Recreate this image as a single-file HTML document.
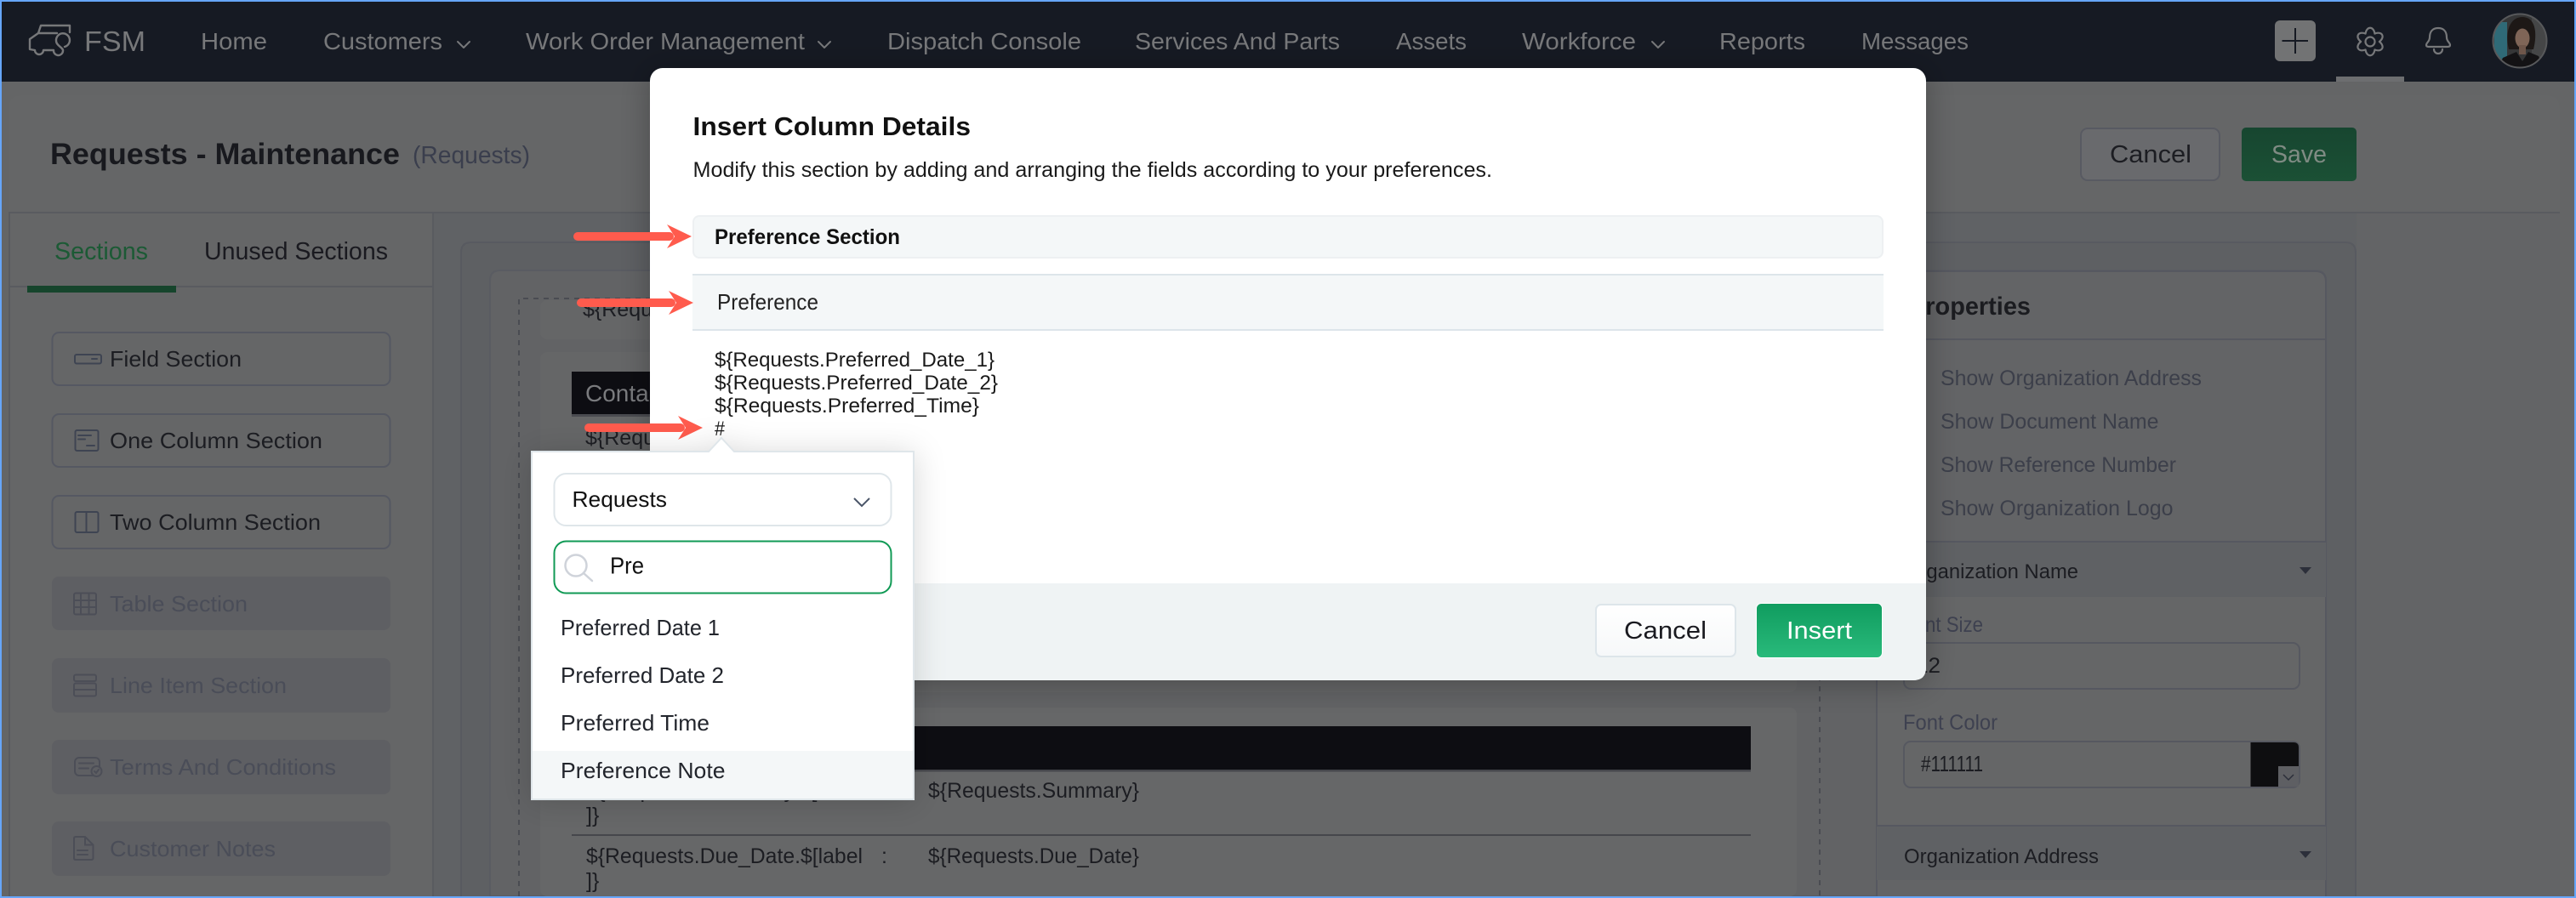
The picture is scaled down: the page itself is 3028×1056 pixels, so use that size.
<!DOCTYPE html>
<html><head><meta charset="utf-8"><title>Insert Column Details</title>
<style>
html,body{margin:0;padding:0;background:#66a6fa;width:3028px;height:1056px;overflow:hidden}
svg{display:block}
text{font-family:"Liberation Sans",sans-serif;white-space:pre}
.ln{fill:none;stroke-linecap:round;stroke-linejoin:round}
</style></head><body>
<svg xmlns="http://www.w3.org/2000/svg" width="3028" height="1056" viewBox="0 0 3028 1056">
<defs>
<linearGradient id="gi" x1="0" y1="0" x2="0" y2="1"><stop offset="0" stop-color="#109c5f"/><stop offset="1" stop-color="#29ba7b"/></linearGradient>
<linearGradient id="gc" x1="0" y1="0" x2="0" y2="1"><stop offset="0" stop-color="#ffffff"/><stop offset="1" stop-color="#f6f8f9"/></linearGradient>
<linearGradient id="gs" x1="0" y1="0" x2="0" y2="1"><stop offset="0" stop-color="#174630"/><stop offset="1" stop-color="#1b5035"/></linearGradient>
<clipPath id="av"><circle cx="2962" cy="48" r="31"/></clipPath>
<filter id="sh" x="-10%" y="-20%" width="120%" height="140%"><feDropShadow dx="0" dy="4" stdDeviation="18" flood-color="#000" flood-opacity=".28"/></filter>
<filter id="sp" x="-20%" y="-20%" width="140%" height="140%"><feDropShadow dx="0" dy="2" stdDeviation="18" flood-color="#000" flood-opacity=".16"/></filter>
</defs>

<!-- frame -->
<rect width="3028" height="1056" fill="#66a6fa"/>
<rect x="2" y="2" width="3024" height="1052" fill="#646566"/>

<!-- nav -->
<rect x="2" y="2" width="3024" height="94" fill="#161a23"/>
<g class="ln" fill="none" stroke="#77787a" stroke-width="2.4" style="fill:none">
<path d="M82 38V30H48L45 39H67M45 39L35 46V58L41 59A5 5 0 0 0 51 59H63A5.500 5.500 0 0 0 74 60C75 56 66 54 66 48A8 8 0 1 1 76 55"/>
</g>
<text x="99" y="60" font-size="33" fill="#77787a" textLength="72" lengthAdjust="spacingAndGlyphs">FSM</text>
<g font-size="28" fill="#77787a">
<text x="236" y="58" textLength="78" lengthAdjust="spacingAndGlyphs">Home</text>
<text x="380" y="58" textLength="140" lengthAdjust="spacingAndGlyphs">Customers</text>
<text x="618" y="58" textLength="328" lengthAdjust="spacingAndGlyphs">Work Order Management</text>
<text x="1043" y="58" textLength="228" lengthAdjust="spacingAndGlyphs">Dispatch Console</text>
<text x="1334" y="58" textLength="241" lengthAdjust="spacingAndGlyphs">Services And Parts</text>
<text x="1641" y="58" textLength="83" lengthAdjust="spacingAndGlyphs">Assets</text>
<text x="1789" y="58" textLength="134" lengthAdjust="spacingAndGlyphs">Workforce</text>
<text x="2021" y="58" textLength="101" lengthAdjust="spacingAndGlyphs">Reports</text>
<text x="2188" y="58" textLength="126" lengthAdjust="spacingAndGlyphs">Messages</text>
</g>
<g stroke="#77787a" stroke-width="2" style="fill:none" class="ln">
<path d="M538 49L545 56L552 49"/><path d="M962 49L969 56L976 49"/><path d="M1942 49L1949 56L1956 49"/>
</g>
<rect x="2674" y="24" width="48" height="48" rx="6" fill="#727374"/>
<path d="M2682.500 48H2713M2698 33V63" stroke="#161a23" stroke-width="2" fill="none"/>
<g transform="translate(2786 49)" fill="none" stroke="#77787a" stroke-width="2.200" stroke-linecap="round">
<path d="M-5.500 -9.500C-4 -18.500 4 -18.500 5.500 -9.500"/>
<path transform="rotate(60)" d="M-5.500 -9.500C-4 -18.500 4 -18.500 5.500 -9.500"/>
<path transform="rotate(120)" d="M-5.500 -9.500C-4 -18.500 4 -18.500 5.500 -9.500"/>
<path transform="rotate(180)" d="M-5.500 -9.500C-4 -18.500 4 -18.500 5.500 -9.500"/>
<path transform="rotate(240)" d="M-5.500 -9.500C-4 -18.500 4 -18.500 5.500 -9.500"/>
<path transform="rotate(300)" d="M-5.500 -9.500C-4 -18.500 4 -18.500 5.500 -9.500"/>
<circle r="5.500"/>
</g>
<rect x="2746" y="90" width="80" height="6" fill="#6d6e70"/>
<path d="M2866 33C2858 33 2856 39 2856 44C2856 49 2852 50 2852 53Q2852 55 2855 55H2877Q2880 55 2880 53C2880 50 2876 49 2876 44C2876 39 2874 33 2866 33ZM2861 58A5 5 0 0 0 2871 58" fill="none" stroke="#77787a" stroke-width="2.200" stroke-linecap="round"/>
<g clip-path="url(#av)">
<rect x="2930" y="16" width="64" height="64" fill="#353637"/>
<rect x="2932" y="26" width="15" height="46" fill="#2f6a77"/>
<rect x="2976" y="16" width="20" height="64" fill="#454647"/>
<path d="M2949 58C2944 38 2950 20 2965 20C2980 20 2983 38 2978 58Z" fill="#1d1816"/>
<ellipse cx="2965" cy="45" rx="8.500" ry="11.500" fill="#7f6557"/>
<rect x="2961" y="53" width="8" height="11" fill="#6e564a"/>
<path d="M2936 80L2942 68L2958 61L2965 72L2972 61L2984 66L2990 80Z" fill="#131214"/>
</g>
<circle cx="2962" cy="48" r="31.500" fill="none" stroke="#58595b" stroke-width="2"/>

<!-- page header -->
<path d="M10 250V128Q10 112 26 112H2993Q3009 112 3009 128V250Z" fill="#656667"/>
<rect x="10" y="249" width="2999" height="2.500" fill="#595b60"/>
<text x="59" y="193" font-size="35" font-weight="bold" fill="#18191e" textLength="411" lengthAdjust="spacingAndGlyphs">Requests - Maintenance</text>
<text x="485" y="192" font-size="29" fill="#3a3e4d" textLength="138" lengthAdjust="spacingAndGlyphs">(Requests)</text>
<rect x="2446" y="151" width="163" height="61" rx="8" fill="#696a6d" stroke="#585a62" stroke-width="2"/>
<text x="2480" y="191" font-size="29" fill="#1c1d22" textLength="96" lengthAdjust="spacingAndGlyphs">Cancel</text>
<rect x="2635" y="150" width="135" height="63" rx="5" fill="url(#gs)"/>
<text x="2670" y="191" font-size="29" fill="#7f8b83" textLength="65" lengthAdjust="spacingAndGlyphs">Save</text>

<!-- left panel -->
<rect x="10" y="251" width="499" height="803" fill="#656667"/>
<rect x="10" y="251" width="2" height="803" fill="#595b60"/>
<rect x="508" y="251" width="2" height="803" fill="#595b60"/>
<rect x="10" y="336" width="499" height="2" fill="#595b60"/>
<rect x="32" y="336" width="175" height="8" fill="#16452c"/>
<text x="64" y="305" font-size="29" fill="#1c5a35" textLength="110" lengthAdjust="spacingAndGlyphs">Sections</text>
<text x="240" y="305" font-size="29" fill="#1a1a20" textLength="216" lengthAdjust="spacingAndGlyphs">Unused Sections</text>

<g fill="none" stroke="#555862" stroke-width="2">
<rect x="61.500" y="391" width="397" height="62" rx="8"/>
<rect x="61.500" y="487" width="397" height="62" rx="8"/>
<rect x="61.500" y="583" width="397" height="62" rx="8"/>
</g>
<g fill="#5e5f63">
<rect x="61" y="678" width="398" height="63" rx="8"/>
<rect x="61" y="774" width="398" height="64" rx="8"/>
<rect x="61" y="870" width="398" height="64" rx="8"/>
<rect x="61" y="966" width="398" height="64" rx="8"/>
</g>
<g font-size="26" fill="#1c1d22">
<text x="129" y="431" textLength="155" lengthAdjust="spacingAndGlyphs">Field Section</text>
<text x="129" y="527" textLength="250" lengthAdjust="spacingAndGlyphs">One Column Section</text>
<text x="129" y="623" textLength="248" lengthAdjust="spacingAndGlyphs">Two Column Section</text>
</g>
<g font-size="26" fill="#4a4d58">
<text x="129" y="719" textLength="162" lengthAdjust="spacingAndGlyphs">Table Section</text>
<text x="129" y="815" textLength="208" lengthAdjust="spacingAndGlyphs">Line Item Section</text>
<text x="129" y="911" textLength="266" lengthAdjust="spacingAndGlyphs">Terms And Conditions</text>
<text x="129" y="1007" textLength="195" lengthAdjust="spacingAndGlyphs">Customer Notes</text>
</g>
<g fill="none" stroke="#3e4452" stroke-width="2" stroke-linecap="round">
<rect x="88" y="417" width="31" height="10.500" rx="2"/><path d="M108 422H114"/>
<rect x="88.500" y="506" width="27" height="24" rx="2"/><path d="M92 512H107M92 516.500H100M102 524H111"/>
<rect x="88.500" y="602" width="27" height="24" rx="2"/><path d="M101.500 602V626"/>
</g>
<g fill="none" stroke="#4c4e57" stroke-width="2" stroke-linecap="round">
<rect x="87" y="697.500" width="26" height="25" rx="2"/><path d="M95 698V722M104.500 698V722M87 706H113M87 714H113"/>
<rect x="87" y="793.500" width="26" height="7.500" rx="2"/><rect x="87" y="803.500" width="26" height="15" rx="2"/><path d="M87 811H113"/>
<rect x="88" y="891" width="29" height="21" rx="5"/><path d="M93 897.500H110M93 903.500H104"/>
<circle cx="113.500" cy="907" r="6" fill="#5e5f63"/><path d="M111 907L113 909L116 905"/>
<path d="M100 984H89Q87 984 87 986V1009Q87 1011 89 1011H107Q109.500 1011 109.500 1009V993.500ZM100 984V993.500H109.500M91 1000H103M91 1005H103"/>
</g>

<!-- canvas -->
<rect x="510" y="251" width="2516" height="803" fill="#606265"/>
<rect x="3009" y="251" width="17" height="803" fill="#646566"/>
<rect x="2770" y="251" width="239" height="803" fill="#636466"/>
<path d="M542 1054V297Q542 285 554 285H2757Q2769 285 2769 297V1054" fill="#5e6063" stroke="#585a60" stroke-width="2"/>
<path d="M576 1054V330Q576 318 588 318H2722Q2734 318 2734 330V1054Z" fill="#626365" stroke="#5a5c62" stroke-width="2"/>
<rect x="635" y="353" width="1477" height="46" rx="8" fill="#656667"/>
<rect x="635" y="414" width="1477" height="400" rx="8" fill="#656667"/>
<rect x="635" y="832" width="1477" height="222" rx="8" fill="#666768"/>
<path d="M610 1054V351H2139V1054" fill="none" stroke="#4a4c52" stroke-width="2" stroke-dasharray="6 6"/>
<text x="685" y="372" font-size="25" fill="#1c1d22">${Requests.Header}</text>
<rect x="672" y="437" width="400" height="50" fill="#0d0d12"/>
<rect x="672" y="487" width="400" height="3" fill="#4a4b50"/>
<text x="688" y="472" font-size="28" fill="#7a7b7e">Contact</text>
<text x="688" y="523" font-size="25" fill="#1c1d22">${Requests.Contact}</text>
<rect x="672" y="854" width="1386" height="51" fill="#0d0d12"/>
<rect x="672" y="905" width="1386" height="2.500" fill="#46474c"/>
<rect x="672" y="981" width="1386" height="2" fill="#46474c"/>
<g font-size="25" fill="#1c1d22">
<text x="689" y="938" textLength="325" lengthAdjust="spacingAndGlyphs">${Requests.Summary.$[label</text>
<text x="689" y="967">]}</text>
<text x="1091" y="938" textLength="248" lengthAdjust="spacingAndGlyphs">${Requests.Summary}</text>
<text x="689" y="1015" textLength="325" lengthAdjust="spacingAndGlyphs">${Requests.Due_Date.$[label</text>
<text x="1036" y="1015">:</text>
<text x="689" y="1044">]}</text>
<text x="1091" y="1015" textLength="248" lengthAdjust="spacingAndGlyphs">${Requests.Due_Date}</text>
</g>

<!-- properties -->
<path d="M2206 1054V331Q2206 319 2218 319H2722Q2734 319 2734 331V1054Z" fill="#636466" stroke="#565860" stroke-width="2"/>
<rect x="2206" y="398" width="528" height="2" fill="#565860"/>
<text x="2244" y="370" font-size="30" font-weight="bold" fill="#1b1c20" textLength="143" lengthAdjust="spacingAndGlyphs">Properties</text>
<g font-size="25" fill="#3c3f4a">
<text x="2281" y="453" textLength="307" lengthAdjust="spacingAndGlyphs">Show Organization Address</text>
<text x="2281" y="504" textLength="256.500" lengthAdjust="spacingAndGlyphs">Show Document Name</text>
<text x="2281" y="555" textLength="277" lengthAdjust="spacingAndGlyphs">Show Reference Number</text>
<text x="2281" y="606" textLength="273.500" lengthAdjust="spacingAndGlyphs">Show Organization Logo</text>
</g>
<rect x="2206" y="636" width="528" height="66" fill="#5f6164"/>
<rect x="2206" y="636" width="528" height="2" fill="#565860"/>
<text x="2238" y="680" font-size="24" fill="#1c1d22" textLength="205" lengthAdjust="spacingAndGlyphs">Organization Name</text>
<path d="M2703 667H2717L2710 675Z" fill="#2c2f3a"/>
<rect x="2207" y="702" width="526" height="268" fill="#656667"/>
<text x="2237" y="743" font-size="25" fill="#3e4150" textLength="94" lengthAdjust="spacingAndGlyphs">Font Size</text>
<rect x="2238" y="756" width="465" height="54" rx="8" fill="none" stroke="#565860" stroke-width="2"/>
<text x="2252" y="791" font-size="25" fill="#1c1d22" textLength="29" lengthAdjust="spacingAndGlyphs">12</text>
<text x="2237" y="858" font-size="25" fill="#3e4150" textLength="111" lengthAdjust="spacingAndGlyphs">Font Color</text>
<rect x="2238" y="872" width="465" height="54" rx="8" fill="none" stroke="#565860" stroke-width="2"/>
<text x="2258" y="907" font-size="26" fill="#1c1d22" textLength="73" lengthAdjust="spacingAndGlyphs">#111111</text>
<path d="M2645.500 873H2696Q2702 873 2702 879V925H2645.500Z" fill="#0e0e10"/>
<rect x="2678" y="901" width="24" height="24" fill="#5e5f63"/>
<path d="M2684 911L2690 917L2696 911" fill="none" stroke="#2c2f3a" stroke-width="1.500"/>
<rect x="2206" y="970" width="528" height="65" fill="#5f6164"/>
<rect x="2206" y="970" width="528" height="2" fill="#565860"/>
<rect x="2207" y="1035" width="526" height="19" fill="#636466"/>
<text x="2238" y="1015" font-size="24" fill="#1c1d22" textLength="229" lengthAdjust="spacingAndGlyphs">Organization Address</text>
<path d="M2703 1001H2717L2710 1009Z" fill="#2c2f3a"/>

<!-- bottom frame repaint -->
<rect x="0" y="1054" width="3028" height="2" fill="#66a6fa"/>
<rect x="3026" y="0" width="2" height="1056" fill="#66a6fa"/>

<!-- modal -->
<rect x="764" y="80" width="1500" height="720" rx="15" fill="#fff" filter="url(#sh)"/>
<path d="M764 686H2264V785Q2264 800 2249 800H779Q764 800 764 785Z" fill="#eff3f4"/>
<text x="814.500" y="159" font-size="31" font-weight="bold" fill="#111" textLength="326.500" lengthAdjust="spacingAndGlyphs">Insert Column Details</text>
<text x="814.500" y="208" font-size="25" fill="#1a1a1a" textLength="939.500" lengthAdjust="spacingAndGlyphs">Modify this section by adding and arranging the fields according to your preferences.</text>
<rect x="815" y="254" width="1398" height="49" rx="7" fill="#f4f7f8" stroke="#edf0f2" stroke-width="2"/>
<text x="840" y="287" font-size="25" font-weight="bold" fill="#111" textLength="218" lengthAdjust="spacingAndGlyphs">Preference Section</text>
<rect x="814" y="322" width="1400" height="67" fill="#f4f7f8"/>
<rect x="814" y="322" width="1400" height="2" fill="#dde5ea"/>
<rect x="814" y="387" width="1400" height="2" fill="#dde5ea"/>
<text x="843" y="364" font-size="26" fill="#222" textLength="119" lengthAdjust="spacingAndGlyphs">Preference</text>
<g font-size="24" fill="#1a1a1a">
<text x="840" y="431" textLength="329" lengthAdjust="spacingAndGlyphs">${Requests.Preferred_Date_1}</text>
<text x="840" y="458" textLength="333" lengthAdjust="spacingAndGlyphs">${Requests.Preferred_Date_2}</text>
<text x="840" y="485" textLength="311" lengthAdjust="spacingAndGlyphs">${Requests.Preferred_Time}</text>
<text x="840" y="512" textLength="12" lengthAdjust="spacingAndGlyphs">#</text>
</g>
<rect x="1876" y="711" width="164" height="61" rx="6" fill="url(#gc)" stroke="#dde5ea" stroke-width="2"/>
<text x="1909" y="751" font-size="29" fill="#1a1a20" textLength="97" lengthAdjust="spacingAndGlyphs">Cancel</text>
<rect x="2064.500" y="709.500" width="148" height="64" rx="6" fill="url(#gi)" stroke="#fff" stroke-width="1"/>
<text x="2100" y="751" font-size="29" fill="#fff" textLength="77" lengthAdjust="spacingAndGlyphs">Insert</text>

<!-- arrows -->
<g fill="#ff5b4d">
<rect x="674" y="273" width="118" height="10" rx="5"/><path d="M784 264L813 278L784 292L793 278Z"/>
<rect x="678" y="351" width="116" height="10" rx="5"/><path d="M786 342L815 356L786 370L795 356Z"/>
<rect x="687" y="498" width="118" height="10" rx="5"/><path d="M797 489L826 503L797 517L806 503Z"/>
</g>

<!-- popup -->
<path d="M624 531H833L848 514L863 531H1075V941H624Z" fill="#fff" filter="url(#sp)"/>
<path d="M625 531H833L848 515L863 531H1074V940H625Z" fill="#fff" stroke="#dfe6ea" stroke-width="2"/>
<rect x="651.500" y="557" width="396" height="61" rx="14" fill="#fff" stroke="#dfe6ea" stroke-width="2"/>
<text x="672.500" y="596" font-size="26" fill="#111" textLength="111.500" lengthAdjust="spacingAndGlyphs">Requests</text>
<path d="M1004 586L1013 595L1022 586" fill="none" stroke="#4a5568" stroke-width="2"/>
<rect x="651.500" y="636.500" width="396" height="61" rx="14" fill="#fff" stroke="#109a55" stroke-width="2"/>
<circle cx="677" cy="665" r="12.500" fill="none" stroke="#cfd3da" stroke-width="2.500"/>
<path d="M686 674L696 683" stroke="#cfd3da" stroke-width="2.500" stroke-linecap="round"/>
<text x="717" y="674.500" font-size="28" fill="#111" textLength="40" lengthAdjust="spacingAndGlyphs">Pre</text>
<rect x="626" y="883" width="447" height="56" fill="#f4f7f8"/>
<g font-size="26" fill="#22252c">
<text x="659" y="747" textLength="187" lengthAdjust="spacingAndGlyphs">Preferred Date 1</text>
<text x="659" y="803" textLength="192" lengthAdjust="spacingAndGlyphs">Preferred Date 2</text>
<text x="659" y="859" textLength="175" lengthAdjust="spacingAndGlyphs">Preferred Time</text>
<text x="659" y="915" textLength="193.500" lengthAdjust="spacingAndGlyphs">Preference Note</text>
</g>
</svg>
</body></html>
